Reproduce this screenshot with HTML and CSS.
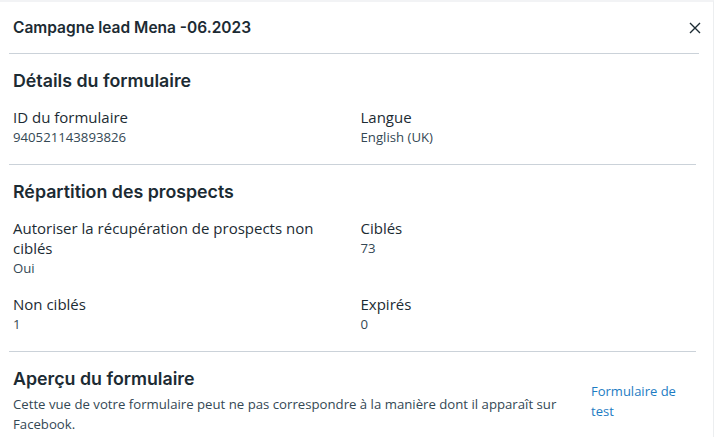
FILE: index.html
```html
<!DOCTYPE html>
<html>
<head>
    <title>Campagne lead Mena -06.2023</title>
    <link rel="stylesheet" href="styles.css">
</head>
<body>
    <div class="dialog">
        <!-- Header -->
        <div class="dialog-header">
            <h2 class="dialog-title">Campagne lead Mena -06.2023</h2>
            <span class="close-btn">
                <svg width="12" height="12" viewBox="0 0 12 12"><path d="M1 1L11 11M11 1L1 11" stroke="#1c2b33" stroke-width="1.4" fill="none"/></svg>
            </span>
        </div>

        <!-- Details -->
        <div class="section">
            <h3 class="section-title">Détails du formulaire</h3>
            <div class="fields">
                <div class="field">
                    <div class="label">ID du formulaire</div>
                    <div class="value">940521143893826</div>
                </div>
                <div class="field">
                    <div class="label">Langue</div>
                    <div class="value">English (UK)</div>
                </div>
            </div>
        </div>

        <!-- Prospects -->
        <div class="section">
            <h3 class="section-title">Répartition des prospects</h3>
            <div class="fields">
                <div class="field">
                    <div class="label">Autoriser la récupération de prospects non ciblés</div>
                    <div class="value">Oui</div>
                </div>
                <div class="field">
                    <div class="label">Ciblés</div>
                    <div class="value">73</div>
                </div>
                <div class="field">
                    <div class="label">Non ciblés</div>
                    <div class="value">1</div>
                </div>
                <div class="field">
                    <div class="label">Expirés</div>
                    <div class="value">0</div>
                </div>
            </div>
        </div>

        <!-- Preview -->
        <div class="section last">
            <div class="preview">
                <div class="preview-text">
                    <h3 class="section-title">Aperçu du formulaire</h3>
                    <p class="desc">Cette vue de votre formulaire peut ne pas correspondre à la manière dont il apparaît sur Facebook.</p>
                </div>
                <a href="#" class="test-link">Formulaire de test</a>
            </div>
        </div>
    </div>
</body>
</html>
```

FILE: styles.css
```css
* {
  padding: 0;
  margin: 0;
  box-sizing: border-box;
}

body {
  background: #ffffff;
  font-family: "Open Sans", "Noto Sans", sans-serif;
  color: #1c2b33;
}

.dialog {
  border-top: 2px solid #f2f3f5;
  border-right: 1px solid #eceef0;
  height: 437px;
  padding: 0 17px 0 13px;
}

/* header */
.dialog-header {
  display: flex;
  align-items: center;
  justify-content: space-between;
  height: 52px;
  margin: 0 -3px 0 -4px;
  padding: 0 0 0 4px;
  border-bottom: 1px solid #cbd2d9;
}

.dialog-title {
  font-family: "Inter", sans-serif;
  font-size: 15.5px;
  font-weight: 600;
}

.close-btn {
  display: flex;
  margin-right: -2px;
}

/* sections */
.section {
  margin-left: -4px;
  padding: 15px 0 17px 4px;
  border-bottom: 1px solid #cbd2d9;
}

.section.last {
  border-bottom: none;
}

.section-title {
  font-family: "Inter", sans-serif;
  font-size: 17.8px;
  font-weight: 600;
  line-height: 24px;
}

.fields {
  display: grid;
  grid-template-columns: 1fr 1fr;
  column-gap: 12px;
  row-gap: 16px;
  margin-top: 14px;
}

.label {
  font-size: 15px;
  line-height: 20px;
}

.value {
  font-size: 13.2px;
  line-height: 20px;
  color: #344854;
}

/* preview */
.preview {
  display: flex;
  align-items: center;
}

.preview-text {
  width: 578px;
}

.desc {
  margin-top: 3px;
  font-size: 13.2px;
  line-height: 20px;
  color: #344854;
}

.test-link {
  color: #1d7cc3;
  font-size: 13px;
  line-height: 20px;
  width: 92px;
  text-decoration: none;
}
```
